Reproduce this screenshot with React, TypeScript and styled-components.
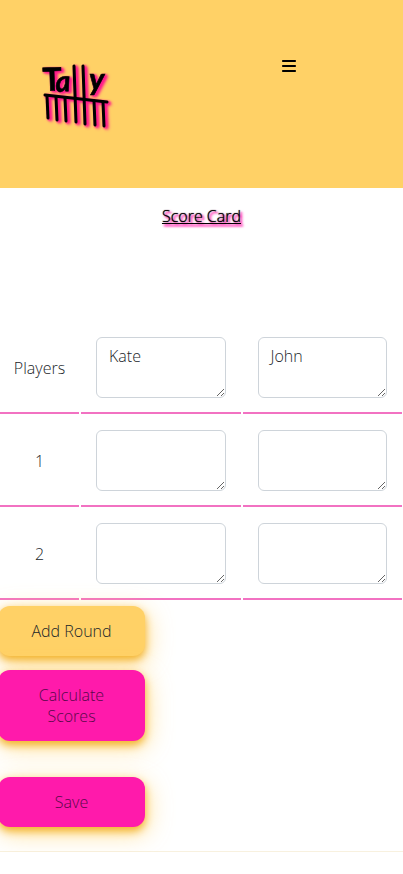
import React from "react";
import styled, { createGlobalStyle } from "styled-components";
import { FaBars } from "react-icons/fa6";

const GlobalStyle = createGlobalStyle`
  *, *::before, *::after { box-sizing: border-box; }
  body {
    margin: 0;
    background: #fff;
    color: #212529;
    font-family: "Open Sans", "Noto Sans", sans-serif;
    font-size: 16px;
    font-weight: 300;
    line-height: 24px;
  }
`;

const Page = styled.div`
  overflow-x: hidden;
`;

const Header = styled.header`
  display: grid;
  grid-template-columns: 2fr 1fr;
  align-items: start;
  height: 188px;
  padding: 56px 24px 0 36px;
  background: #ffd166;
`;

const Logo = styled.svg`
  display: block;
  width: 84px;
  height: 80px;
  overflow: visible;
  filter: drop-shadow(2px 1px 1px #ff1a8c) drop-shadow(1px 1px 1px #ff1a8c);
`;

const MenuButton = styled.button`
  display: flex;
  justify-self: start;
  padding: 2px 16px;
  border: 0;
  background: none;
  color: #000;
  font-size: 16px;
`;

const Title = styled.h1`
  margin: 16px 0 93px;
  color: #000;
  font-size: 16px;
  font-weight: 300;
  line-height: 24px;
  text-align: center;
  text-decoration: underline;
  text-shadow: 0 0 1px #000, 2px 2px 2px #ff1aab, 2px 2px 3px #ff1aab;
`;

const ScoreTable = styled.table`
  width: calc(100% + 3px);
  margin-left: -2px;
  border-collapse: separate;
  border-spacing: 2px 0;
  table-layout: fixed;
`;

const LabelColumn = styled.col`
  width: 79px;
`;

const cell = `
  padding: 16px 15px 14px;
  border-bottom: 2px solid #f272c2;
  font-weight: 300;
  text-align: center;
  vertical-align: middle;
`;

const RowLabel = styled.th`
  ${cell}
  padding-left: 0;
  padding-right: 0;
`;

const ScoreCell = styled.td`
  ${cell}
`;

const ScoreInput = styled.textarea`
  display: block;
  width: 100%;
  height: 61px;
  padding: 6px 12px;
  border: 1px solid #ced4da;
  border-radius: 6px;
  background: #fff;
  color: #212529;
  font: inherit;
  resize: vertical;
  overflow: hidden;
`;

const Actions = styled.div`
  display: flex;
  flex-direction: column;
  align-items: flex-start;
  margin-left: -2px;
  padding: 6px 0 24px;
  border-bottom: 1px solid #f8f1df;
`;

const ActionButton = styled.button<{ $tone: "yellow" | "pink"; $gap?: number }>`
  width: 147px;
  margin-top: ${(p) => p.$gap ?? 0}px;
  padding: 15px 32px 14px;
  border: 0;
  border-radius: 12px;
  background: ${(p) => (p.$tone === "pink" ? "#ff1aab" : "#ffd166")};
  box-shadow: 0 4px 8px #f3b229, 2px 6px 24px rgba(255, 209, 102, 0.7);
  color: ${(p) => (p.$tone === "pink" ? "#59084a" : "#212529")};
  font: inherit;
  line-height: 21px;
`;

const rows = [
  { label: "Players", values: ["Kate", "John"] },
  { label: "1", values: ["", ""] },
  { label: "2", values: ["", ""] },
];

function TallyLogo() {
  return (
    <Logo viewBox="0 0 84 80" role="img" aria-label="Tally">
      <g fill="#000" stroke="#000" strokeWidth="0.6" fontFamily="Lato, sans-serif" fontWeight="700">
        <text x="7" y="35" fontSize="32" transform="rotate(-2 7 35)">T</text>
        <text x="20" y="36" fontSize="29" fontStyle="italic" transform="rotate(-4 20 36)">a</text>
        <text x="53" y="34" fontSize="31" fontStyle="italic">y</text>
      </g>
      <g stroke="#000" strokeWidth="3" strokeLinecap="round">
        <path d="M9 39 L71 46" />
        <path d="M38 10 L40 66" />
        <path d="M47 10 L49 68" />
        <path d="M11 40 L12 62" />
        <path d="M20 41 L21 64" />
        <path d="M29 42 L30 65" />
        <path d="M58 45 L59 69" />
        <path d="M67 46 L68 70" />
      </g>
    </Logo>
  );
}

export default function App() {
  return (
    <Page>
      <GlobalStyle />
      <Header>
        <TallyLogo />
        <MenuButton type="button" aria-label="Open menu">
          <FaBars />
        </MenuButton>
      </Header>
      <main>
        <Title>Score Card</Title>
        <ScoreTable>
          <colgroup>
            <LabelColumn />
            <col />
            <col />
          </colgroup>
          <tbody>
            {rows.map((row) => (
              <tr key={row.label}>
                <RowLabel scope="row">{row.label}</RowLabel>
                {row.values.map((value, i) => (
                  <ScoreCell key={i}>
                    <ScoreInput
                      aria-label={`${row.label}, column ${i + 1}`}
                      defaultValue={value}
                    />
                  </ScoreCell>
                ))}
              </tr>
            ))}
          </tbody>
        </ScoreTable>
        <Actions>
          <ActionButton type="button" $tone="yellow">Add Round</ActionButton>
          <ActionButton type="button" $tone="pink" $gap={14}>Calculate Scores</ActionButton>
          <ActionButton type="button" $tone="pink" $gap={36}>Save</ActionButton>
        </Actions>
      </main>
    </Page>
  );
}
